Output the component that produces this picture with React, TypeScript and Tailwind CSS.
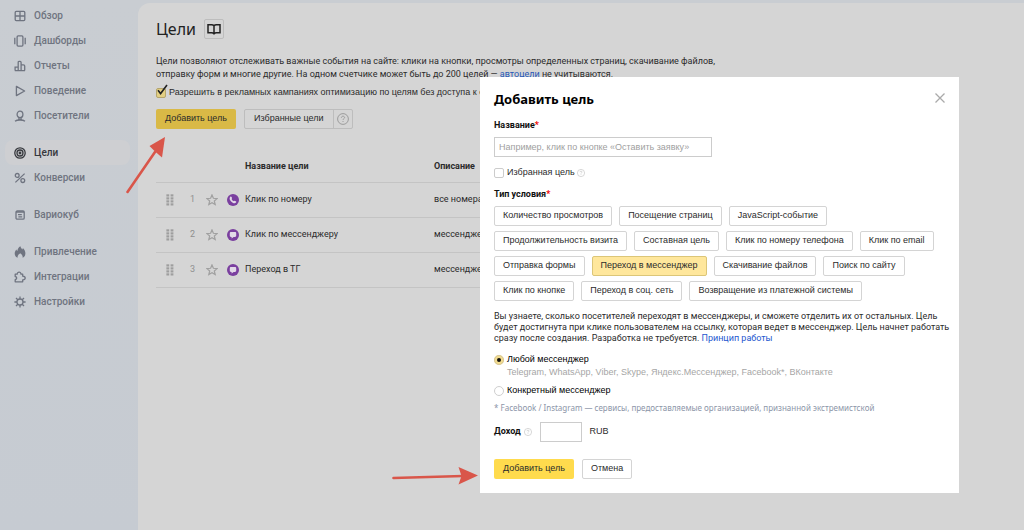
import React, { useState } from "react";
import clsx from "clsx";

const navGroups = [
  [
    { id: "overview", label: "Обзор" },
    { id: "dashboards", label: "Дашборды" },
    { id: "reports", label: "Отчеты" },
    { id: "behavior", label: "Поведение" },
    { id: "visitors", label: "Посетители" },
  ],
  [
    { id: "goals", label: "Цели" },
    { id: "conversions", label: "Конверсии" },
  ],
  [{ id: "variocube", label: "Вариокуб" }],
  [
    { id: "acquisition", label: "Привлечение" },
    { id: "integrations", label: "Интеграции" },
    { id: "settings", label: "Настройки" },
  ],
];

const navIcons: Record<string, React.ReactNode> = {
  overview: (
    <>
      <rect x="1.2" y="1.4" width="9.6" height="9.2" rx="1" />
      <path d="M6 1.4v9.2M1.2 6h9.6" />
    </>
  ),
  dashboards: (
    <>
      <rect x="3.1" y="0.9" width="5.8" height="10.2" rx="1" />
      <path d="M0.8 2.8v6.4M11.2 2.8v6.4" />
    </>
  ),
  reports: (
    <path d="M1.1 10.6V7.2h3.1M4.2 10.6V2.4c0-.7.5-1.1 1.1-1.1h.8c.6 0 1 .4 1 1.1v8.2M7.2 4.8h2.2c.8 0 1.3.5 1.3 1.3v4.5M0.8 10.7h10.2" />
  ),
  behavior: <path d="M2.4 1.4v9.2L10.6 6z" strokeLinejoin="round" />,
  visitors: (
    <>
      <ellipse cx="6" cy="4.4" rx="2.9" ry="3.3" />
      <path d="M1 11.300c1.200-1 2.800-1.300 5-1.300s3.800.3 5 1.300M5 7.600V10M7 7.600V10" />
    </>
  ),
  goals: (
    <>
      <circle cx="6" cy="6" r="5.2" />
      <circle cx="6" cy="6" r="3" />
      <circle cx="6" cy="6" r="0.8" />
    </>
  ),
  conversions: (
    <>
      <circle cx="3.2" cy="3.4" r="1.9" />
      <circle cx="8.8" cy="8.6" r="1.9" />
      <path d="M10.6 1.6 1.4 10.4" />
    </>
  ),
  variocube: (
    <>
      <rect x="2" y="2" width="8.2" height="8.2" rx="1.2" />
      <path d="M2 3h8.200M4 5.600h3.800M4.400 7.900H8.200" />
    </>
  ),
  acquisition: (
    <path
      d="M6.4.3c.3 1.6 1.3 2.2 1.8 3.1.5-.3.7-.8.7-1.4 1.6 1.6 2.5 3.5 2.5 5.3 0 2.400-1.300 4-2.800 4.500.3-1.600-.4-3.200-2.400-4.600-2.100 1.300-2.900 3-2.500 4.600C2 11.200.7 9.700.7 7.500c0-1.700.9-2.900 1.700-4 .2.8.5 1.200 1 1.400C3.600 3 4.600 1.300 6.400.3z"
      fill="currentColor"
      stroke="none"
    />
  ),
  integrations: (
    <path
      d="M1.200 3.200h2c0-1.300.9-2.100 1.900-2.100S7 1.900 7 3.200h1.700v2c1.500.1 2.500.9 2.500 1.900S10.200 8.900 8.700 9v1.800H1.200V8.700c1-.2 1.500-.8 1.500-1.600s-.5-1.400-1.500-1.600z"
      strokeLinejoin="round"
    />
  ),
  settings: (
    <>
      <circle cx="6" cy="6" r="3" />
      <path d="M6 .4V3M6 9v2.600M.4 6H3M9 6h2.600M2 2l1.800 1.800M8.200 8.200 10 10M10 2 8.200 3.800M3.800 8.200 2 10" />
    </>
  ),
};

const goals = [
  { id: 1, kind: "phone", name: "Клик по номеру", description: "все номера" },
  { id: 2, kind: "chat", name: "Клик по мессенджеру", description: "мессенджер" },
  { id: 3, kind: "chat", name: "Переход в ТГ", description: "мессенджер" },
];

const conditionTypes = [
  "Количество просмотров",
  "Посещение страниц",
  "JavaScript-событие",
  "Продолжительность визита",
  "Составная цель",
  "Клик по номеру телефона",
  "Клик по email",
  "Отправка формы",
  "Переход в мессенджер",
  "Скачивание файлов",
  "Поиск по сайту",
  "Клик по кнопке",
  "Переход в соц. сеть",
  "Возвращение из платежной системы",
];

const GoalIcon = ({ kind }: { kind: string }) => (
  <svg viewBox="0 0 12 12" className="block size-3">
    <circle cx="6" cy="6" r="6" fill="#7a3f9f" />
    {kind === "phone" ? (
      <path
        d="M3.200 2.900c.5-.6 1.100-.4 1.400.2l.4 1c.2.400-.4.800-.3 1.100.4.900 1 1.500 1.900 1.900.4.200.7-.4 1.100-.3l1 .4c.6.300.8.900.3 1.400-.8.900-2 .9-3.300.1-1.200-.7-2.100-1.600-2.700-2.800-.5-1.100-.5-2.300.2-3z"
        fill="#e2d9e8"
      />
    ) : (
      <path
        d="M4 3h4c.7 0 1.200.5 1.200 1.200v2.600C9.200 7.500 8.700 8 8 8H6.600L4.600 9.500V8H4c-.7 0-1.200-.5-1.200-1.200V4.200C2.800 3.500 3.300 3 4 3z"
        fill="#e2d9e8"
      />
    )}
  </svg>
);

const DragIcon = () => (
  <svg viewBox="0 0 8 12" className="block h-3 w-2" fill="#9e9e9e">
    {[0.3, 3.3, 6.3, 9.3].map((y) => (
      <React.Fragment key={y}>
        <rect x="0.4" y={y} width="2.800" height="2.200" />
        <rect x="4.600" y={y} width="2.800" height="2.200" />
      </React.Fragment>
    ))}
  </svg>
);

const HelpIcon = ({ className }: { className?: string }) => (
  <svg viewBox="0 0 12 12" className={className} fill="none" stroke="currentColor">
    <circle cx="6" cy="6" r="5.400" />
    <path d="M4.400 4.800c0-1 .7-1.600 1.600-1.600s1.600.6 1.600 1.400c0 1-1.600 1.200-1.600 2.300M6 8v1" />
  </svg>
);

const Sidebar = () => (
  <nav className="flex w-[138px] shrink-0 flex-col gap-3 bg-linear-to-b from-[#c9cdd2] to-[#c6cbd2] pt-[3px] pr-2 pl-[5px] font-[Roboto,sans-serif]">
    {navGroups.map((group) => (
      <ul key={group[0].id}>
        {group.map((item) => (
          <li key={item.id}>
            <a
              href={`#${item.id}`}
              className={clsx(
                "flex h-[25px] items-center gap-2 rounded-lg px-[9px] text-[10px] font-medium",
                item.id === "goals"
                  ? "bg-[#cecfd2] text-[#36383d]"
                  : "text-[#6f7480]"
              )}
            >
              <svg
                viewBox="0 0 12 12"
                className="size-3 shrink-0"
                fill="none"
                stroke="currentColor"
                strokeWidth="1.300"
              >
                {navIcons[item.id]}
              </svg>
              {item.label}
            </a>
          </li>
        ))}
      </ul>
    ))}
  </nav>
);

const GoalsPage = () => (
  <main className="mt-[3px] min-w-0 flex-1 rounded-tl-xl bg-[#d5d5d5] px-[18px] pt-4 font-[Roboto,sans-serif] text-[9px] text-[#2b2b2b]">
    <div className="flex h-5 items-center gap-2">
      <h1 className="font-['Noto_Sans',sans-serif] text-base text-[#222]">Цели</h1>
      <button
        aria-label="Справка"
        className="flex size-5 items-center justify-center rounded-xs border border-[#bdbdbd]"
      >
        <svg viewBox="0 0 14 12" className="h-3 w-3.5" fill="none" stroke="#222" strokeWidth="1.500">
          <path d="M7 2.800C6.500 2 5.500 1.700 4.600 1.700H1v8h3.600c1 0 1.900.3 2.400 1 .5-.7 1.400-1 2.400-1H13v-8H9.400c-.9 0-1.900.3-2.400 1.100zM7 2.800v7.600" />
        </svg>
      </button>
    </div>

    <p className="mt-4 max-w-[562px] leading-[13px]">
      Цели позволяют отслеживать важные события на сайте: клики на кнопки,
      просмотры определенных страниц, скачивание файлов, отправку форм и многие
      другие. На одном счетчике может быть до 200 целей —{" "}
      <a href="#autogoals" className="text-[#2558b8]">
        автоцели
      </a>{" "}
      не учитываются.
    </p>

    <label className="mt-[5px] flex h-3.5 items-center gap-[3px] font-['Liberation_Sans',sans-serif] whitespace-nowrap">
      <span className="relative size-[10px]">
        <input
          type="checkbox"
          defaultChecked
          className="peer block size-[10px] appearance-none rounded-xs border border-[#b5a56c] bg-[#e3cf83]"
        />
        <svg
          viewBox="0 0 12 12"
          className="pointer-events-none absolute -top-1 left-0 hidden size-3 peer-checked:block"
          fill="none"
          stroke="#222"
          strokeWidth="1.600"
        >
          <path d="M2 6.200 4.600 9.600 11 1" />
        </svg>
      </span>
      Разрешить в рекламных кампаниях оптимизацию по целям без доступа к счетчику
    </label>

    <div className="mt-[9px] flex gap-2 font-['Liberation_Sans',sans-serif]">
      <button className="h-5 rounded-xs bg-[#d9b946] px-[9px]">Добавить цель</button>
      <div className="flex h-5 rounded-xs border border-[#bdbdbd]">
        <button className="px-[9px]">Избранные цели</button>
        <button
          aria-label="Об избранных целях"
          className="flex w-[19px] items-center justify-center border-l border-[#bdbdbd] text-[#9c9c9c]"
        >
          <HelpIcon className="size-3" />
        </button>
      </div>
    </div>

    <table className="mt-5 w-full max-w-[790px] table-fixed text-left">
      <thead>
        <tr className="h-[33px] border-b border-[#c4c4c4]">
          <td className="w-[34px]" />
          <td className="w-4" />
          <td className="w-[21px]" />
          <td className="w-[18px]" />
          <th className="w-[189px] pt-[2px] font-bold">Название цели</th>
          <th className="pt-[2px] font-bold">Описание</th>
        </tr>
      </thead>
      <tbody>
        {goals.map((goal) => (
          <tr key={goal.id} className="h-[35px] border-b border-[#c4c4c4]">
            <td className="pl-[10px]">
              <DragIcon />
            </td>
            <td className="text-[#8f8f8f]">{goal.id}</td>
            <td>
              <button aria-label="В избранное" className="block">
                <svg viewBox="0 0 12 12" className="size-3" fill="none" stroke="#a0a0a0" strokeWidth="1.200">
                  <path d="m6 .9 1.400 3.400 3.700.3-2.800 2.400.9 3.600L6 8.700l-3.200 1.900.9-3.600L.9 4.600l3.700-.3z" />
                </svg>
              </button>
            </td>
            <td>
              <GoalIcon kind={goal.kind} />
            </td>
            <td>{goal.name}</td>
            <td>{goal.description}</td>
          </tr>
        ))}
      </tbody>
    </table>
  </main>
);

const AddGoalDialog = () => {
  const [type, setType] = useState("Переход в мессенджер");
  const [target, setTarget] = useState("any");

  const radioClass = (value: string) =>
    clsx(
      "size-[10px] appearance-none rounded-full",
      target === value
        ? "border-[3px] border-[#f3dc8e] bg-[#111] outline -outline-offset-1 outline-[#d5c69a]"
        : "border border-[#cfcfcf] bg-white"
    );

  return (
    <div
      role="dialog"
      aria-labelledby="dialog-title"
      className="w-[479px] bg-white p-3.5 font-['Liberation_Sans',sans-serif] text-[9px] text-[#2b2b2b]"
    >
      <div className="flex h-[18px] items-center justify-between">
        <h2
          id="dialog-title"
          className="font-['Noto_Sans',sans-serif] text-[13px] font-bold text-black"
        >
          Добавить цель
        </h2>
        <button aria-label="Закрыть" className="self-start pt-[2px] text-[#aaa]">
          <svg viewBox="0 0 10 10" className="block size-[10px]" fill="none" stroke="currentColor" strokeWidth="1.300">
            <path d="m.5.5 9 9M9.500.5l-9 9" />
          </svg>
        </button>
      </div>

      <label
        htmlFor="goal-name"
        className="mt-[10px] block h-3 font-[Roboto,sans-serif] leading-3 font-bold text-[#111]"
      >
        Название<span className="text-[#f00000]">*</span>
      </label>
      <input
        id="goal-name"
        type="text"
        placeholder="Например, клик по кнопке «Оставить заявку»"
        className="mt-1.5 block h-5 w-[218px] border border-[#ccc] px-1 placeholder:text-[#a0a0a0]"
      />

      <div className="mt-[10px] flex h-3 items-center">
        <label className="flex items-center gap-[3px]">
          <input
            type="checkbox"
            className="size-[10px] appearance-none rounded-xs border border-[#ccc] bg-white checked:bg-[#f3dc8e]"
          />
          Избранная цель
        </label>
        <HelpIcon className="ml-0.5 size-2 text-[#c4c4c4]" />
      </div>

      <h3 className="mt-[9px] h-3 font-[Roboto,sans-serif] leading-3 font-bold text-[#111]">
        Тип условия<span className="text-[#f00000]">*</span>
      </h3>
      <div className="mt-1.5 flex flex-wrap gap-x-[7px] gap-y-[5px]">
        {conditionTypes.map((item) => (
          <button
            key={item}
            onClick={() => setType(item)}
            className={clsx(
              "h-5 rounded-xs border px-2",
              item === type
                ? "border-[#dcc678] bg-[#ffe79c]"
                : "border-[#d4d4d4] bg-white"
            )}
          >
            {item}
          </button>
        ))}
      </div>

      <p className="mt-[10px] -mr-2 font-[Roboto,sans-serif] leading-[11px]">
        Вы узнаете, сколько посетителей переходят в мессенджеры, и сможете
        отделить их от остальных. Цель будет достигнута при клике пользователем
        на ссылку, которая ведет в мессенджер. Цель начнет работать сразу после
        создания. Разработка не требуется.{" "}
        <a href="#how" className="text-[#2458cf]">
          Принцип работы
        </a>
      </p>

      <label className="mt-[10px] flex h-3 items-center gap-[3px] text-black">
        <input
          type="radio"
          name="messenger"
          checked={target === "any"}
          onChange={() => setTarget("any")}
          className={radioClass("any")}
        />
        Любой мессенджер
      </label>
      <div className="h-3 pl-[13px] leading-3 text-[#a6a6a6]">
        Telegram, WhatsApp, Viber, Skype, Яндекс.Мессенджер, Facebook*, ВКонтакте
      </div>
      <label className="mt-[7px] flex h-3 items-center gap-[3px] text-black">
        <input
          type="radio"
          name="messenger"
          checked={target === "specific"}
          onChange={() => setTarget("specific")}
          className={radioClass("specific")}
        />
        Конкретный мессенджер
      </label>

      <div className="mt-[5px] h-3 font-['Noto_Sans',sans-serif] text-[8px] leading-3 text-[#8c95a8]">
        * Facebook / Instagram — сервисы, предоставляемые организацией,
        признанной экстремистской
      </div>

      <div className="mt-2 flex h-5 items-center">
        <label htmlFor="income" className="font-[Roboto,sans-serif] font-bold text-[#111]">
          Доход
        </label>
        <HelpIcon className="ml-[3px] size-2 text-[#c4c4c4]" />
        <input id="income" type="text" className="mr-2 ml-2 h-5 w-[42px] border border-[#ccc] px-1" />
        RUB
      </div>

      <div className="mt-[17px] flex gap-2">
        <button className="h-5 rounded-xs bg-[#ffdb4d] px-[9px]">Добавить цель</button>
        <button className="h-5 rounded-xs border border-[#d4d4d4] px-2">Отмена</button>
      </div>
    </div>
  );
};

export default function App() {
  return (
    <div className="relative flex min-h-screen bg-[#c9cdd2]">
      <Sidebar />
      <GoalsPage />

      <div className="absolute inset-0 flex items-start justify-end pt-[77px] pr-[65px]">
        <AddGoalDialog />
      </div>

      {/* pointer arrows */}
      <svg viewBox="0 0 40 58" className="absolute top-[136px] left-[126px] h-[58px] w-10" fill="#d9564a">
        <path d="M1.500 56 29 16" stroke="#d9564a" strokeWidth="2.600" strokeLinecap="round" />
        <path d="M39 1 36 21.500 29 15.500 23.500 10z" />
      </svg>
      <svg viewBox="0 0 88 20" className="absolute top-[466px] left-[391px] h-5 w-[88px]" fill="#d9564a">
        <path d="M2.500 12 72 10" stroke="#d9564a" strokeWidth="2.600" strokeLinecap="round" />
        <path d="M87 9.500 67.500 1 70.500 10 67.500 18.500z" />
      </svg>
    </div>
  );
}
